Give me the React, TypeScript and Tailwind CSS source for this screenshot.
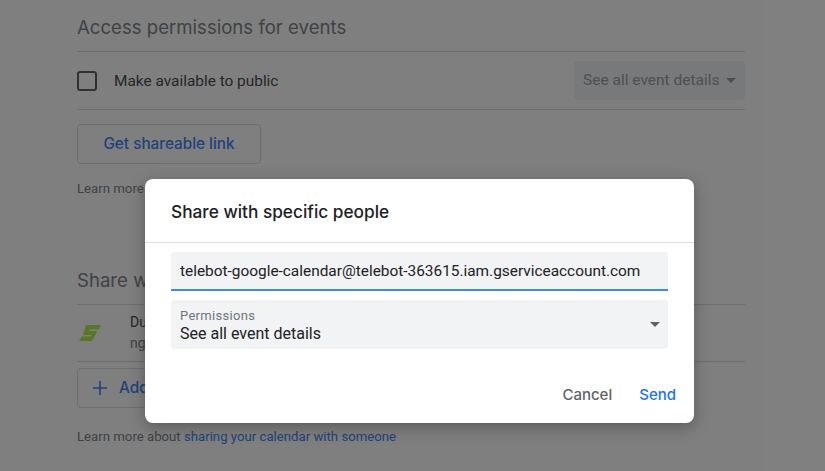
import React from "react";

function Caret({ className }: { className: string }) {
  return (
    <svg width="10" height="5" viewBox="0 0 10 5" className={className}>
      <path d="M0 0h10L5 5z" fill="currentColor" />
    </svg>
  );
}

function Logo() {
  return (
    <svg width="24" height="18" viewBox="0 0 24 18">
      <path
        d="M8 1h15l-2.500 4.500H11.500L11 7h8l-2.500 6-3 4H1l2.500-4.500h9.500l.5-1.500H5z"
        fill="#b0f050"
      />
    </svg>
  );
}

export default function App() {
  return (
    <div className="relative h-[471px] w-[825px] overflow-hidden bg-white font-['Roboto',sans-serif]">
      {/* Settings page behind the dialog */}
      <div className="ml-[77px] w-[668px]">
        <h2 className="h-[52px] border-b border-[#dadce0] pt-[13px] font-['Inter',sans-serif] text-[18.600px] leading-[28px] text-[#80868b]">
          Access permissions for events
        </h2>
        <div className="flex h-[58px] items-center border-b border-[#dadce0]">
          <div className="h-5 w-5 rounded-[3px] border-2 border-[#5f6368]" />
          <span className="ml-[17px] mt-[2px] text-[15.400px] text-[#4a4d52]">Make available to public</span>
          <div className="ml-auto flex h-[39px] w-[171px] items-center justify-between rounded bg-[#f1f3f4] pl-[9px] pr-[9px]">
            <span className="text-[15.500px] text-[#9aa0a6]">See all event details</span>
            <Caret className="text-[#9aa0a6]" />
          </div>
        </div>
        <button className="mt-[14px] block h-[40px] w-[184px] rounded border border-[#dadce0] font-['Inter',sans-serif] text-[15.300px] font-medium text-[#4285f4]">
          Get shareable link
        </button>
        <p className="mt-[15px] text-[13.200px] leading-[20px] text-[#80868b]">Learn more</p>

        <h2 className="mt-[67px] h-[39px] border-b border-[#dadce0] font-['Inter',sans-serif] text-[18.600px] leading-[28px] text-[#80868b]">
          Share with
        </h2>
        <div className="flex h-[57px] items-center border-b border-[#dadce0]">
          <div className="ml-[1px] w-[24px]">
            <Logo />
          </div>
          <div className="ml-[28px] text-[14px] leading-[21px]">
            <div className="text-[#4a4d52]">Du</div>
            <div className="text-[#80868b]">ng</div>
          </div>
        </div>
        <button className="mt-[6px] flex h-[40px] w-[184px] items-center rounded border border-[#dadce0] pl-[14px] font-['Inter',sans-serif] text-[15.300px] font-medium text-[#4285f4]">
          <svg width="16" height="16" viewBox="0 0 16 16" className="mr-[11px]">
            <path d="M8 1v14M1 8h14" stroke="currentColor" strokeWidth="1.600" />
          </svg>
          Add
        </button>
        <p className="mt-[19px] text-[13.200px] leading-[20px] text-[#80868b]">
          Learn more about <span className="text-[#4285f4]">sharing your calendar with someone</span>
        </p>
      </div>

      <div className="absolute inset-0 bg-black/50" />

      {/* Dialog */}
      <div className="absolute left-[145px] top-[179px] h-[244px] w-[549px] rounded-lg bg-white shadow-[0_4px_16px_rgba(0,0,0,0.3)]">
        <div className="flex h-[64px] items-center border-b border-[#dadce0] pl-[26px] pt-[2px] font-['Inter',sans-serif] text-[17.250px] font-medium text-[#202124]">
          Share with specific people
        </div>
        <div className="px-[26px] pt-[9px]">
          <div className="flex h-[39px] items-center rounded-t border-b-2 border-[#4285f4] bg-[#f1f3f4] pl-[9px] pt-[3px] text-[15.400px] text-[#202124]">
            telebot-google-calendar@telebot-363615.iam.gserviceaccount.com
          </div>
          <div className="mt-[9px] flex h-[49px] items-center justify-between rounded bg-[#f1f3f4] pl-[9px] pr-[8px]">
            <div className="pt-[3px]">
              <div className="text-[13px] leading-[16px] tracking-[0.3px] text-[#70757a]">Permissions</div>
              <div className="text-[16px] leading-[20px] text-[#202124]">See all event details</div>
            </div>
            <Caret className="text-[#5f6368]" />
          </div>
        </div>
        <div className="mt-[34px] flex justify-end gap-[27px] pr-[18px] font-['Inter',sans-serif] text-[15px] font-medium leading-[24px]">
          <span className="text-[#5f6368]">Cancel</span>
          <span className="text-[#1a73e8]">Send</span>
        </div>
      </div>
    </div>
  );
}
